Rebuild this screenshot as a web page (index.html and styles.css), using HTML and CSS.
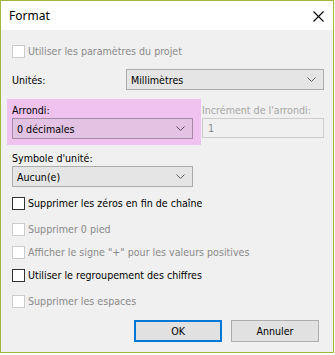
FILE: index.html
```html
<!DOCTYPE html>
<html lang="fr">
<head>
  <meta charset="UTF-8">
  <title>Format</title>
  <link rel="stylesheet" href="styles.css">
</head>
<body>

<div class="window">
  <div class="titlebar">
    <span class="title">Format</span>
    <svg class="close" width="11" height="11" viewBox="0 0 11 11">
      <path d="M0.5 0.5 L10.5 10.5 M10.5 0.5 L0.5 10.5" stroke="#000" stroke-width="1.1" fill="none"/>
    </svg>
  </div>

  <div class="content">
    <div class="check disabled row-project">
      <span class="box"></span>
      <span>Utiliser les paramètres du projet</span>
    </div>

    <div class="units">
      <span class="label">Unités:</span>
      <div class="select wide">
        <span>Millimètres</span>
        <svg class="arrow" width="9" height="5" viewBox="0 0 9 5"><path d="M0.5 0.5 L4.5 4.5 L8.5 0.5" stroke="#606060" fill="none"/></svg>
      </div>
    </div>

    <div class="rounding">
      <div class="highlight">
        <div class="label">Arrondi:</div>
        <div class="select narrow pinked">
          <span>0 décimales</span>
          <svg class="arrow" width="9" height="5" viewBox="0 0 9 5"><path d="M0.5 0.5 L4.5 4.5 L8.5 0.5" stroke="#5a4a5a" fill="none"/></svg>
        </div>
      </div>
      <div class="increment">
        <div class="label muted">Incrément de l'arrondi:</div>
        <div class="textbox">1</div>
      </div>
    </div>

    <div class="symbol">
      <div class="label">Symbole d'unité:</div>
      <div class="select narrow">
        <span>Aucun(e)</span>
        <svg class="arrow" width="9" height="5" viewBox="0 0 9 5"><path d="M0.5 0.5 L4.5 4.5 L8.5 0.5" stroke="#606060" fill="none"/></svg>
      </div>
    </div>

    <div class="checks">
      <div class="check gap-s"><span class="box"></span><span>Supprimer les zéros en fin de chaîne</span></div>
      <div class="check disabled gap-l"><span class="box"></span><span>Supprimer 0 pied</span></div>
      <div class="check disabled gap-s"><span class="box"></span><span>Afficher le signe "+" pour les valeurs positives</span></div>
      <div class="check gap-s"><span class="box"></span><span>Utiliser le regroupement des chiffres</span></div>
      <div class="check disabled gap-l"><span class="box"></span><span>Supprimer les espaces</span></div>
    </div>

    <div class="buttons">
      <div class="btn default">OK</div>
      <div class="btn">Annuler</div>
    </div>
  </div>
</div>

</body>
</html>
```

FILE: styles.css
```css
body {
  margin: 0;
  background-color: #ffffff;
  font-family: "DejaVu Sans Condensed", "DejaVu Sans", sans-serif;
  font-size: 10.6px;
  color: #000;
}
.window {
  width: 334px;
  height: 353px;
  box-sizing: border-box;
  border: 1px solid #a2b83a;
  display: flex;
  flex-direction: column;
}
.titlebar {
  height: 29px;
  background-color: #ffffff;
  display: flex;
  align-items: center;
  justify-content: space-between;
  padding: 0 9px 0 8px;
}
.title {
  font-family: "Noto Sans", sans-serif;
  font-size: 12px;
}
.close {
  margin-top: 1px;
}
.content {
  flex: 1;
  background-color: #f0f0f0;
  padding: 0 9px 0 11px;
}
.label {
  line-height: 16px;
}
.muted {
  color: #a6a6a6;
}

/* checkboxes */
.check {
  display: flex;
  align-items: center;
  height: 13px;
  gap: 3px;
  line-height: 13px;
}
.check .box {
  width: 11px;
  height: 11px;
  border: 1px solid #333333;
  background-color: #ffffff;
  flex: none;
}
.check.disabled {
  color: #8a8a8a;
}
.check.disabled .box {
  border-color: #cccccc;
}
.row-project {
  margin-top: 15px;
}

/* dropdowns */
.select {
  display: flex;
  align-items: center;
  justify-content: space-between;
  box-sizing: border-box;
  height: 21px;
  padding: 0 7px 0 4px;
  background-color: #e5e5e5;
  border: 1px solid #adadad;
}
.select.wide {
  width: 198px;
}
.select.narrow {
  width: 181px;
}
.select.pinked {
  background-color: #e3c3e3;
  border-color: #a78aa7;
}
.arrow {
  flex: none;
}

.units {
  display: flex;
  justify-content: space-between;
  align-items: center;
  margin-top: 11px;
}

.rounding {
  display: flex;
  margin-top: 9px;
}
.highlight {
  width: 194px;
  height: 46px;
  box-sizing: border-box;
  margin-left: -5px;
  padding: 3px 0 0 5px;
  background-color: #f0c2f0;
}
.increment {
  margin-left: 1px;
  padding-top: 3px;
}
.textbox {
  width: 122px;
  height: 20px;
  box-sizing: border-box;
  border: 1px solid #cccccc;
  background-color: #f0f0f0;
  color: #8a8a8a;
  padding-left: 5px;
  line-height: 18px;
}

.symbol {
  margin-top: 5px;
}

.checks {
  display: flex;
  flex-direction: column;
}
.gap-s {
  margin-top: 10px;
}
.gap-l {
  margin-top: 13px;
}

.buttons {
  display: flex;
  justify-content: flex-end;
  gap: 9px;
  margin-top: 12px;
  padding-right: 5px;
}
.btn {
  width: 88px;
  height: 22px;
  box-sizing: border-box;
  border: 1px solid #adadad;
  background-color: #e1e1e1;
  text-align: center;
  line-height: 20px;
}
.btn.default {
  border: 2px solid #0078d7;
  line-height: 18px;
}
```
